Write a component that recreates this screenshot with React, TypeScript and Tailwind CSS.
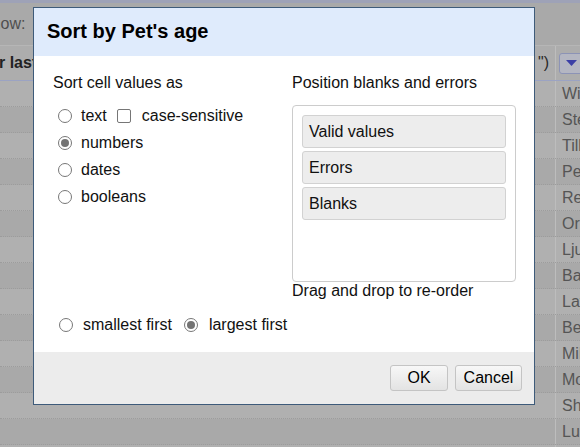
const NAMES = [
  "Widget",
  "Stella",
  "Tillson",
  "Petra",
  "Rex",
  "Oreo",
  "Ljubica",
  "Barney",
  "Layla",
  "Bernie",
  "Milo",
  "Molly",
  "Shadow",
  "Luna",
  "Max",
];

// ── Bits ──────────────────────────────────────────────────────────────────────

function Radio({ checked = false }: { checked?: boolean }) {
  return (
    <span className="flex h-[14px] w-[14px] shrink-0 items-center justify-center rounded-full border border-[#777] bg-white">
      {checked ? <span className="h-[8px] w-[8px] rounded-full bg-[#737373]" /> : null}
    </span>
  );
}

function Checkbox() {
  return (
    <span className="block h-[14px] w-[14px] shrink-0 rounded-[2px] border border-[#767676] bg-white" />
  );
}

function OrderItem({ label }: { label: string }) {
  return (
    <div className="flex h-[33px] items-center rounded-[3px] border border-[#d2d2d2] bg-[#ededed] pl-[6px]">
      {label}
    </div>
  );
}

function Button({ label, width }: { label: string; width: string }) {
  return (
    <button
      type="button"
      className={`flex h-[26px] items-center justify-center rounded-[3px] border border-[#c4c4c4] bg-linear-to-b from-[#f7f7f7] to-[#e3e3e3] text-black ${width}`}
    >
      {label}
    </button>
  );
}

// ── Background sheet (dimmed) ────────────────────────────────────────────────

function Sheet() {
  return (
    <div className="h-[447px] w-[580px] overflow-hidden bg-[#acacac] text-[16px]">
      <div className="h-[3px] bg-[#9ea2b7]" />
      <div className="flex h-[42px] items-center bg-[#a9a9a9] text-[#4f4f4f]">
        <span className="ml-[-19px]">Show:</span>
      </div>
      <div className="h-px bg-[#b6b6b6]" />
      <div className="flex h-[35px] border-b border-[#9ba3c3] bg-[#adadad]">
        <div className="flex flex-1 items-center justify-between pr-[6px]">
          <span className="ml-[-1px] font-bold text-[#222]">r last name</span>
          <span className="text-[#2a2a2a]">&quot;)</span>
        </div>
        <div className="flex w-[25px] items-center border-l border-[#bdbdbd] pl-[3px]">
          <span className="flex h-[21px] w-[30px] shrink-0 items-center justify-center rounded-[3px] border border-[#8c93b6] bg-[#b4b6c2] pr-[6px]">
            <svg width="11" height="6" viewBox="0 0 11 6">
              <path d="M0 0h11L5.5 6z" fill="#3b3fa6" />
            </svg>
          </span>
        </div>
      </div>
      {NAMES.map((name, i) => (
        <div
          key={name}
          className={`flex h-[26px] border-b border-dotted border-[#9c9c9c] ${
            i % 2 === 0 ? "bg-[#b0b0b0]" : "bg-[#a9a9a9]"
          }`}
        >
          <div className="flex-1" />
          <div className="flex w-[25px] items-center overflow-hidden whitespace-nowrap border-l border-[#bdbdbd] pl-[6px] text-[#555]">
            {name}
          </div>
        </div>
      ))}
    </div>
  );
}

// ── Dialog ────────────────────────────────────────────────────────────────────

export default function App() {
  return (
    <div className="relative h-[447px] w-[580px] overflow-hidden font-['Liberation_Sans',Arial,sans-serif] text-[16px] text-[#111]">
      <Sheet />

      <div className="absolute left-[33px] top-[7px] flex h-[398px] w-[502px] flex-col border border-[#3e5b7a] bg-white">
        {/* Header */}
        <div className="flex h-[48px] items-center bg-[#dfebfc] pb-[2px] pl-[13px]">
          <h2 className="text-[20px] font-bold text-black">Sort by Pet&apos;s age</h2>
        </div>

        {/* Body */}
        <div className="flex flex-1 flex-col pl-[19px] pt-[18px]">
          <div className="flex">
            <div className="w-[239px]">
              <p className="leading-[18px]">Sort cell values as</p>
              <div className="mt-[10px] flex flex-col">
                <label className="flex h-[27px] items-center pl-[5px]">
                  <Radio />
                  <span className="ml-[9px]">text</span>
                  <span className="ml-[10px] flex">
                    <Checkbox />
                  </span>
                  <span className="ml-[11px]">case-sensitive</span>
                </label>
                <label className="flex h-[27px] items-center pl-[5px]">
                  <Radio checked />
                  <span className="ml-[9px]">numbers</span>
                </label>
                <label className="flex h-[27px] items-center pl-[5px]">
                  <Radio />
                  <span className="ml-[9px]">dates</span>
                </label>
                <label className="flex h-[27px] items-center pl-[5px]">
                  <Radio />
                  <span className="ml-[9px]">booleans</span>
                </label>
              </div>
            </div>

            <div>
              <p className="leading-[18px]">Position blanks and errors</p>
              <div className="mt-[13px] flex h-[177px] w-[224px] flex-col gap-[3px] rounded-[4px] border border-[#cccccc] p-[9px]">
                <OrderItem label="Valid values" />
                <OrderItem label="Errors" />
                <OrderItem label="Blanks" />
              </div>
              <p className="leading-[18px]">Drag and drop to re-order</p>
            </div>
          </div>

          <div className="mt-[12px] flex h-[26px] items-center pl-[6px]">
            <Radio />
            <span className="ml-[10px]">smallest first</span>
            <span className="ml-[12px] flex">
              <Radio checked />
            </span>
            <span className="ml-[11px]">largest first</span>
          </div>
        </div>

        {/* Footer */}
        <div className="flex h-[52px] items-center justify-end gap-[7px] bg-[#ececec] pr-[12px]">
          <Button label="OK" width="w-[58px]" />
          <Button label="Cancel" width="w-[67px]" />
        </div>
      </div>
    </div>
  );
}
